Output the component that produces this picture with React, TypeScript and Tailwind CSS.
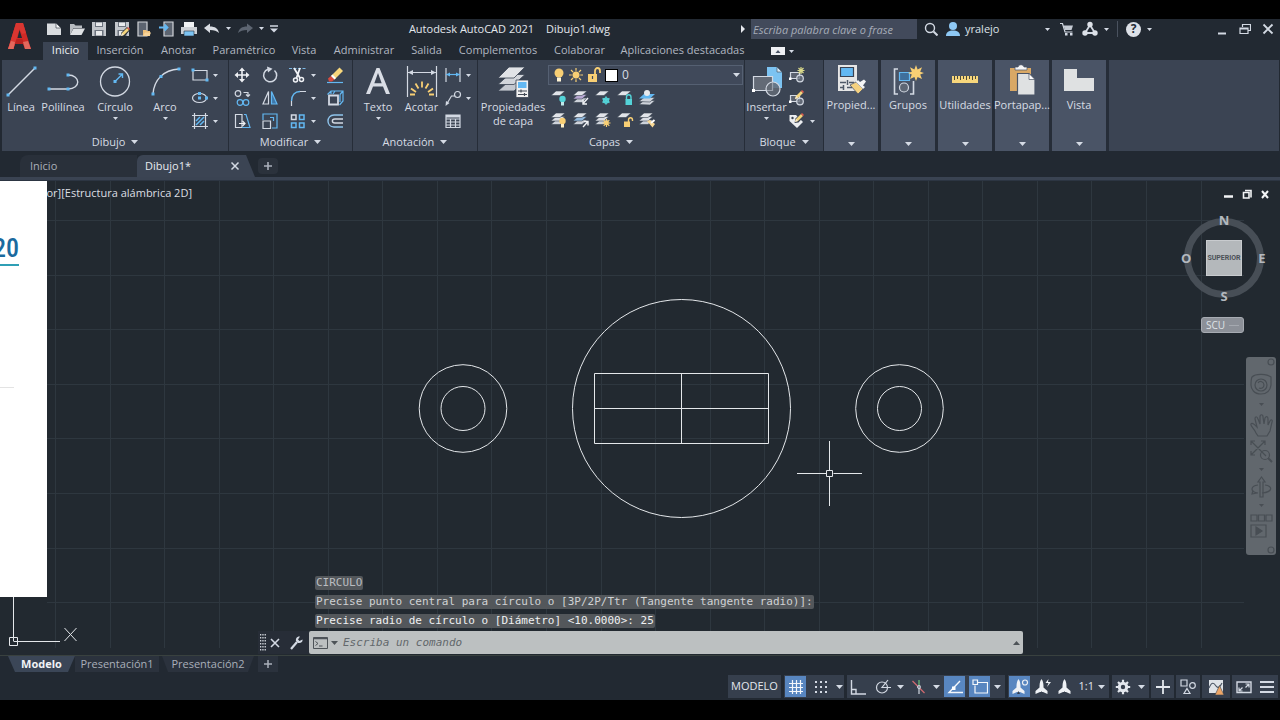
import React from "react";

type Kids = { children?: React.ReactNode };

const Ico = ({ w = 18, h = 18, children }: { w?: number; h?: number } & Kids) => (
  <svg
    width={w}
    height={h}
    viewBox={`0 0 ${w} ${h}`}
    fill="none"
    stroke="#d3d9e3"
    strokeWidth="1.2"
    className="shrink-0"
    aria-hidden="true"
  >
    {children}
  </svg>
);

const Caret = ({ w = 5 }: { w?: number }) => (
  <svg width={w} height={w === 5 ? 3 : 4} viewBox="0 0 8 4" preserveAspectRatio="none" className="shrink-0" aria-hidden="true">
    <path d="M0 0h8L4 4z" fill="#d5dbe5" />
  </svg>
);

const Dot = ({ x, y }: { x: number; y: number }) => (
  <rect x={x - 1.5} y={y - 1.5} width="3" height="3" fill="#63b8f2" stroke="none" />
);

/* ---------- quick access toolbar ---------- */

const NewIcon = () => (
  <Ico w={16} h={16}>
    <path d="M1 2.500h9l5 4.500V14H1z" fill="#d9dcdf" stroke="none" />
    <path d="M10 2v5h5z" fill="#f6f7f8" stroke="#252c36" strokeWidth=".6" />
  </Ico>
);
const OpenIcon = () => (
  <Ico w={16} h={16}>
    <path d="M1 14V3h4l1.500 1.500H13V7H4.500z" fill="#b9bdc2" stroke="none" />
    <path d="M4.500 7.500H16L12.500 14H1z" fill="#dfe2e5" stroke="none" />
  </Ico>
);
const SaveShape = () => (
  <>
    <path d="M1 1h14v14H1z" fill="#c3c7cc" stroke="none" />
    <path d="M4 1h8v5H4zM3.500 9h9v6h-9z" fill="#6c737e" stroke="none" />
    <path d="M5 1.500h6V5H5zM5 10h6v4.500H5z" fill="#e9ebed" stroke="none" />
  </>
);
const Pencil = ({ x = 0, y = 0 }: { x?: number; y?: number }) => (
  <g transform={`translate(${x} ${y})`} stroke="none">
    <path d="M0 9l1-3 5-5 2 2-5 5z" fill="#f3d47c" />
    <path d="M6 1l1-1 2 2-1 1z" fill="#e35b4f" />
    <path d="M0 9l1-3 2 2z" fill="#f6ead0" />
  </g>
);
const SaveIcon = () => (
  <Ico w={16} h={16}>
    <SaveShape />
  </Ico>
);
const SaveAsIcon = () => (
  <Ico w={16} h={16}>
    <SaveShape />
    <path d="M6.500 15.500l1-4L13 6l3 3-5 6z" fill="#252c36" stroke="none" />
    <Pencil x={7} y={6} />
  </Ico>
);
const MobileOpenIcon = () => (
  <Ico w={16} h={16}>
    <path d="M2 1h9v14H2z" fill="#5c6470" stroke="#d2d5d9" />
    <path d="M7 15V9h3l1 1h3v5z" fill="#edbf79" stroke="none" />
    <path d="M7 15l2-3.500h6L13.500 15z" fill="#f7d49a" stroke="none" />
  </Ico>
);
const MobileSaveIcon = () => (
  <Ico w={16} h={16}>
    <path d="M5 1h9v14H5z" fill="#5c6470" stroke="#d2d5d9" />
    <path d="M0 6.500h8M5.500 3.500l3 3-3 3" stroke="#63b8f2" strokeWidth="1.800" />
  </Ico>
);
const PrintIcon = () => (
  <Ico w={16} h={16}>
    <path d="M3 1h10v5H3z" fill="#f1f3f5" stroke="none" />
    <path d="M0 6h16v7H0z" fill="#cdd1d6" stroke="none" />
    <path d="M3 10h10v5H3z" fill="#7cc3f2" stroke="#252c36" strokeWidth=".6" />
  </Ico>
);
const ArrowBack = ({ flip = false }: { flip?: boolean }) => (
  <Ico w={16} h={12}>
    <path
      d="M0 5l6-4.500V3.500c5 0 8 2 9 6.500-2-2-5-3-9-3V10z"
      fill={flip ? "#5d6571" : "#d9dde3"}
      stroke="none"
      transform={flip ? "translate(16 0) scale(-1 1)" : undefined}
    />
  </Ico>
);

/* ---------- large ribbon icons (32 x 32) ---------- */

const LineIcon = () => (
  <Ico w={32} h={32}>
    <path d="M3 29L30 2" strokeWidth="1.400" />
    <Dot x={3} y={29} />
    <Dot x={30} y={2} />
  </Ico>
);
const PolyIcon = () => (
  <Ico w={32} h={32}>
    <path d="M2 23h19c13 0 13-14 0-14" strokeWidth="1.400" />
    <Dot x={2} y={23} />
    <Dot x={21} y={23} />
    <Dot x={21} y={9} />
  </Ico>
);
const CircleIcon = () => (
  <Ico w={32} h={32}>
    <circle cx="16" cy="15.500" r="14.500" strokeWidth="1.300" />
    <path d="M16 15.500L23 8.500M19.500 8h4v4" stroke="#63b8f2" strokeWidth="1.400" />
    <Dot x={16} y={15.5} />
  </Ico>
);
const ArcIcon = () => (
  <Ico w={32} h={32}>
    <path d="M4 28C5 14 14 4 30 3" strokeWidth="1.400" />
    <Dot x={4} y={28} />
    <Dot x={12} y={10.5} />
    <Dot x={30} y={3} />
  </Ico>
);
const TextIcon = () => (
  <Ico w={32} h={32}>
    <path d="M4 28L14.500 2h3L28 28h-4l-3-7.500H11L8 28zM12.300 17.200h7.400L16 7z" fill="#d9dde5" stroke="none" fillRule="evenodd" />
  </Ico>
);
const DimIcon = () => (
  <Ico w={32} h={32}>
    <path d="M1.500 0v31M30.500 0v31M2 6.500h28" strokeWidth="1.200" />
    <path d="M2 6.500l5-2.500v5zM30 6.500l-5-2.500v5z" fill="#d3d9e3" stroke="none" />
    <path d="M16 15.500v6M9.500 17.500l3 5M22.500 17.500l-3 5M5 22.500l5 3.500M27 22.500l-5 3.500M4 28.500h5M28 28.500h-5" stroke="#f8cf74" strokeWidth="1.800" />
  </Ico>
);
const LayerPropsIcon = () => (
  <Ico w={32} h={32}>
    <g stroke="#3b4453" strokeWidth=".8">
      <path d="M1 25L12 15h16L17 25z" fill="#c4c8d0" />
      <path d="M1 18.500L12 8.500h16L17 18.500z" fill="#d2d5db" />
      <path d="M1 12L12 1h16L17 12z" fill="#e1e3e7" />
    </g>
    <path d="M19 14h12.500v17.500H19z" fill="#f1f1f1" stroke="#3b4453" strokeWidth=".8" />
    <path d="M21 16h8.500v6H21z" fill="#63b8f2" stroke="none" />
    <path d="M21 25h9M21 28.500h9M24 23.500v3M27.500 27v3" stroke="#434a56" />
  </Ico>
);
const InsertIcon = () => (
  <Ico w={32} h={32}>
    <path d="M16 1h10l5 5v16H16z" fill="#7cc3f2" stroke="none" />
    <path d="M26 1v5h5z" fill="#d6ecfb" stroke="#3b4453" strokeWidth=".6" />
    <path d="M2.500 10.500h19v14h-19z" fill="#636a76" />
    <circle cx="22" cy="23" r="7" fill="#636a76" fillOpacity=".85" />
    <path d="M21.500 17v7.500H16" stroke="#9aa1ac" />
    <rect x="1" y="23" width="3" height="3" fill="#fff" stroke="none" />
  </Ico>
);
const PropsIcon = () => (
  <Ico w={32} h={32}>
    <path d="M3 1h19v26H3z" fill="#e6e6e6" stroke="none" />
    <path d="M5.500 3.500h13v9h-13z" fill="#63b8f2" stroke="#394253" />
    <path d="M5 18.500h6M14 18.500h5M5 23.500h4M12 23.500h5M12.500 16v5M8.500 21v5" stroke="#505967" strokeWidth="1.500" />
    <path d="M15 21l6-3 7 7-5 5z" fill="#f5d180" stroke="#4a5466" strokeWidth=".8" />
    <path d="M21 18l2-2 2 2 4-2.500 2 2-3 4 2 1.500-2 2z" fill="#f5f5f5" stroke="none" />
  </Ico>
);
const GroupsIcon = () => (
  <Ico w={32} h={32}>
    <path d="M6 5H2.500v25H6M18 30h3.500V17" strokeWidth="1.600" />
    <path d="M7.500 8.500h10v8h-10z" fill="#3f6f9c" stroke="#63b8f2" />
    <circle cx="12" cy="23.500" r="4.500" fill="#5d6674" />
    <path d="M24 1l1.600 4.500L30 3.200l-1.800 4.600L32 9l-3.800 1.400L30 15l-4.400-2L24 17l-1.600-4L18 15l1.800-4.600L16 9l3.800-1.200L18 3.200l4.400 2.300z" fill="#f8cf74" stroke="none" />
  </Ico>
);
const RulerIcon = () => (
  <Ico w={32} h={32}>
    <path d="M3 12h26v7H3z" fill="#f8d77c" stroke="none" />
    <path d="M5.500 12v4M8.500 12v3M11.500 12v4M14.500 12v3M17.500 12v4M20.500 12v3M23.500 12v4M26.500 12v3" stroke="#4a4a3c" strokeWidth="1" />
  </Ico>
);
const ClipIcon = () => (
  <Ico w={32} h={32}>
    <path d="M4 4h21v23H4z" fill="#d9a865" stroke="none" />
    <path d="M9 6V3h3c1-3 5-3 6 0h3v3z" fill="#f5f5f5" stroke="#4a5466" strokeWidth=".7" />
    <path d="M11.500 9.500H23l6 6V31H11.500z" fill="#dfe1e2" stroke="#4a5466" />
    <path d="M23 9.500v6h6z" fill="#fff" stroke="#4a5466" strokeWidth=".7" />
  </Ico>
);
const ViewIcon = () => (
  <Ico w={32} h={32}>
    <path d="M1 5h13v9h17v13H1z" fill="#dfe1e2" stroke="none" />
  </Ico>
);

/* ---------- small ribbon icons ---------- */

const RectIcon = () => (
  <Ico>
    <path d="M2 4.500h14v9.500H2z" />
    <Dot x={2} y={4} />
    <Dot x={16} y={14} />
  </Ico>
);
const EllipseIcon = () => (
  <Ico>
    <ellipse cx="8.500" cy="9" rx="7" ry="4.500" />
    <Dot x={8.5} y={9} />
    <Dot x={15.5} y={9} />
    <Dot x={8.5} y={4.5} />
  </Ico>
);
const HatchIcon = () => (
  <Ico>
    <path d="M3.500 1v16M14.500 1v16M1 3.500h16M1 14.500h16" />
    <path d="M5 9l4-4M5 13l8-8M9 13l4-4" stroke="#63b8f2" strokeWidth="1.500" />
  </Ico>
);
const MoveIcon = () => (
  <Ico>
    <path d="M9 3v12M3 9h12" stroke="#eef0f4" strokeWidth="1.600" />
    <path d="M9 1.500L12 5H6zM9 16.500L6 13h6zM1.500 9L5 6v6zM16.500 9L13 12V6z" fill="#eef0f4" stroke="none" />
  </Ico>
);
const RotateIcon = () => (
  <Ico>
    <path d="M13.500 4.500A6.500 6.500 0 1 1 7 3.200" strokeWidth="1.500" />
    <path d="M6 0.500l5.500 2.300L7 6.500z" fill="#d3d9e3" stroke="none" />
  </Ico>
);
const TrimIcon = () => (
  <Ico>
    <path d="M0 2.500h17" strokeDasharray="3 1.500" stroke="#7db9e6" />
    <path d="M5 2l6 10M11 2L7.500 12" stroke="#f0f2f5" strokeWidth="1.800" />
    <circle cx="6.500" cy="14" r="2" stroke="#f0f2f5" strokeWidth="1.500" />
    <circle cx="12.500" cy="13.500" r="2" stroke="#f0f2f5" strokeWidth="1.500" />
  </Ico>
);
const EraseIcon = () => (
  <Ico>
    <path d="M1 16.500h16" stroke="#63b8f2" />
    <path d="M5 10l8.500-8.500L17 5l-8.500 8.500z" fill="#f8d77c" stroke="none" />
    <path d="M2 12.500L5 10l3.500 3.500L6 15.500H3z" fill="#d94b3f" stroke="none" />
    <path d="M5 10l1.500-1.500L10 12l-1.500 1.500z" fill="#fff" stroke="none" />
  </Ico>
);
const CopyIcon = () => (
  <Ico>
    <circle cx="5" cy="4.500" r="2.800" />
    <path d="M10.500 3.500h4.500V7M13 5.500l2 2 2-2" />
    <circle cx="7" cy="13.500" r="2.800" stroke="#63b8f2" />
    <circle cx="13" cy="13.500" r="2.800" stroke="#63b8f2" />
  </Ico>
);
const MirrorIcon = () => (
  <Ico>
    <path d="M7.500 2.500V15H2z" />
    <path d="M10.500 2.500V15H16z" fill="#3f77a8" stroke="#63b8f2" />
  </Ico>
);
const FilletIcon = () => (
  <Ico>
    <path d="M2.500 17v-5M10 2.500h7" />
    <path d="M2.500 12C2.500 6 6 2.500 11 2.500" stroke="#63b8f2" strokeWidth="1.400" />
  </Ico>
);
const ExplodeIcon = () => (
  <Ico>
    <path d="M3 6.500h9v9H3z" strokeWidth="1.800" />
    <path d="M1.500 5.500L5 2h12v10l-3.500 4M14 5.500L17 2M5 2v3M14 5.500V13M9 2L7 5" stroke="#63b8f2" />
  </Ico>
);
const StretchIcon = () => (
  <Ico>
    <path d="M2.500 2.500H9v13H2.500z" />
    <path d="M11 2.500h2l4 13H9" stroke="#63b8f2" />
    <path d="M6 11.500h6M9.500 9l2.500 2.500L9.500 14" stroke="#f0f2f5" />
  </Ico>
);
const ScaleIcon = () => (
  <Ico>
    <path d="M2 8V2h14v14h-5" stroke="#63b8f2" />
    <path d="M2 9h7.500v7.500H2z" />
    <path d="M9 5.500h3.500V9" stroke="#63b8f2" />
  </Ico>
);
const ArrayIcon = () => (
  <Ico>
    <path d="M2.500 3h4.500v4.500H2.500z" strokeWidth="1.500" />
    <path d="M10.500 3H15v4.500h-4.500zM2.500 11H7v4.500H2.500zM10.500 11H15v4.500h-4.500z" stroke="#63b8f2" strokeWidth="1.500" />
  </Ico>
);
const OffsetIcon = () => (
  <Ico>
    <path d="M17 3H8c-8 0-8 12 0 12h9" stroke="#8fc4ec" strokeWidth="1.400" />
    <path d="M17 7H9c-3.500 0-3.500 4 0 4h8" strokeWidth="1.400" />
  </Ico>
);
const LinearIcon = () => (
  <Ico>
    <path d="M2 2v14M16 2v14" />
    <path d="M2 8.500h14" stroke="#63b8f2" />
    <path d="M2 8.500l4-2v4zM16 8.500l-4-2v4z" fill="#63b8f2" stroke="none" />
  </Ico>
);
const LeaderIcon = () => (
  <Ico>
    <circle cx="13.500" cy="5.500" r="3" />
    <path d="M3 14.500L7.500 7h3" />
    <path d="M1.500 17l.5-5 3.500 2z" fill="#d3d9e3" stroke="none" />
  </Ico>
);
const TableIcon = () => (
  <Ico>
    <path d="M2 3h14v12.500H2zM2 7h14M2 10h14M2 13h14M6.500 7v8.500M11.500 7v8.500" />
    <path d="M2 3h14v2.500H2z" fill="#d3d9e3" stroke="none" />
  </Ico>
);

const Sheets = ({ n = 3, tint = "#dcdfe5" }: { n?: number; tint?: string }) => (
  <g stroke="#3b4453" strokeWidth=".6">
    {n > 2 && <path d="M1 13.500L6 9h9l-5 4.500z" fill="#cdd2da" />}
    {n > 1 && <path d="M1 10L6 5.500h9L10 10z" fill={tint} />}
    <path d="M1 6.500L6 2h9L10 6.500z" fill="#e1e4e9" />
  </g>
);
type LayerKind = "off" | "iso" | "freeze" | "lock" | "current" | "on" | "uniso" | "thaw" | "unlock" | "match";
const LayerIcon = ({ kind }: { kind: LayerKind }) => (
  <Ico>
    {kind === "off" && (
      <>
        <Sheets n={1} />
        <circle cx="12.500" cy="10" r="3.200" fill="#54d3d8" stroke="none" />
        <path d="M11 13h3v3.500h-3z" fill="#bfe9eb" stroke="none" />
      </>
    )}
    {kind === "iso" && (
      <>
        <Sheets tint="#b5a6d0" />
        <path d="M16 9l-4.500 5M11 11v4h4" stroke="#f0f2f5" strokeWidth="1.400" />
      </>
    )}
    {kind === "freeze" && (
      <>
        <Sheets n={1} />
        <path d="M12 7.500v8M8.500 9.500l7 4M15.500 9.500l-7 4" stroke="#54d3d8" strokeWidth="1.600" />
        <circle cx="12" cy="11.500" r="2.500" stroke="#54d3d8" />
      </>
    )}
    {kind === "lock" && (
      <>
        <Sheets n={1} />
        <path d="M10.500 10.500V8c0-3 4.500-3 4.500 0v2.500" stroke="#54d3d8" strokeWidth="1.400" />
        <path d="M9.500 10h6.500v6H9.500z" fill="#54d3d8" stroke="none" />
      </>
    )}
    {kind === "current" && (
      <>
        <path d="M1 15.500l5-4h11l-5 4.500z" fill="#cdd2da" stroke="#3b4453" strokeWidth=".6" />
        <path d="M1 12.500l5-4h11l-5 4.500z" fill="#cdd2da" stroke="#3b4453" strokeWidth=".6" />
        <path d="M1 9.500L6 5h11l-5 4.500z" fill="#63b8f2" stroke="none" />
        <circle cx="9" cy="4" r="3" fill="#e8eaee" stroke="none" />
      </>
    )}
    {kind === "on" && (
      <>
        <Sheets />
        <circle cx="12.500" cy="10" r="3.200" fill="#f8cf74" stroke="none" />
        <path d="M11 13h3v3.500h-3z" fill="#fff0c8" stroke="none" />
      </>
    )}
    {kind === "uniso" && (
      <>
        <Sheets tint="#8fb7dc" />
        <path d="M11 16l4.500-5M12 10.500h4v4" stroke="#f0f2f5" strokeWidth="1.400" />
      </>
    )}
    {kind === "thaw" && (
      <>
        <Sheets />
        <path d="M12.500 8v8M8.500 12h8M9.700 9.200l5.600 5.600M15.300 9.200l-5.600 5.600" stroke="#f8cf74" />
        <circle cx="12.500" cy="12" r="2.300" fill="#f8cf74" stroke="none" />
      </>
    )}
    {kind === "unlock" && (
      <>
        <Sheets n={1} />
        <path d="M12.500 11V9c0-3 4-3 4 0v1" stroke="#f8cf74" strokeWidth="1.400" />
        <path d="M8 10.500h6v5.500H8z" fill="#f8cf74" stroke="none" />
      </>
    )}
    {kind === "match" && (
      <>
        <Sheets />
        <path d="M9 10l3-1 5 4-2.500 3.500z" fill="#f8d894" stroke="none" />
        <path d="M13 12l3.500-3" stroke="#fff" strokeWidth="2" />
      </>
    )}
  </Ico>
);
const blockBase = (
  <>
    <path d="M2.500 6.500h9v6h-9z" fill="#5b626f" />
    <circle cx="12" cy="12.500" r="3.300" fill="#6c7380" fillOpacity=".8" />
    <rect x="1" y="11.500" width="2.500" height="2.500" fill="#fff" stroke="none" />
  </>
);
const BlockNew = () => (
  <Ico>
    {blockBase}
    <path d="M13 1v7M9.500 4.500h7M10.500 2l5 5M15.500 2l-5 5" stroke="#d9d98a" />
  </Ico>
);
const BlockEdit = () => (
  <Ico>
    {blockBase}
    <Pencil x={7} y={1} />
  </Ico>
);
const BlockAttr = () => (
  <Ico>
    <path d="M1.500 3H8l7 7-6 6-7.500-7z" fill="#eceef1" stroke="none" />
    <circle cx="4.500" cy="6" r="1.200" fill="#3b4453" stroke="none" />
    <path d="M6.500 11l1-4.500L13 1l3.500 3-6 6.500z" fill="#3b4453" stroke="none" />
    <Pencil x={7} y={1} />
  </Ico>
);

/* ---------- ribbon building blocks ---------- */

const Big = ({ icon, label, caret, w }: { icon: React.ReactNode; label: string; caret?: boolean; w: string }) => (
  <button className={`flex flex-col items-center pt-1.5 ${w}`}>
    {icon}
    <span className="leading-[17px] whitespace-nowrap">{label}</span>
    {caret && (
      <span className="mt-0.5">
        <Caret />
      </span>
    )}
  </button>
);

const Small = ({ icon, name, caret }: { icon: React.ReactNode; name: string; caret?: boolean }) => (
  <button aria-label={name} className="flex h-[22px] items-center gap-1">
    {icon}
    {caret && <Caret />}
  </button>
);

const Stack = ({ children }: Kids) => <div className="flex flex-col items-start gap-px pt-1">{children}</div>;

const Panel = ({ title, w, children }: { title: string; w: string } & Kids) => (
  <section className={`flex shrink-0 flex-col border-r border-[#262d38] bg-[#3b4453] ${w}`}>
    <div className="flex flex-1">{children}</div>
    <button className="flex h-[18px] items-center justify-center gap-1.5">
      {title}
      <Caret w={7} />
    </button>
  </section>
);

const Collapsed = ({ icon, label }: { icon: React.ReactNode; label: string }) => (
  <button className="flex w-[57px] shrink-0 flex-col items-center border-r-3 border-[#262d38] bg-[#4a5466] pt-1 pb-[5px]">
    {icon}
    <span className="leading-[18px] whitespace-nowrap">{label}</span>
    <span className="mt-auto">
      <Caret w={7} />
    </span>
  </button>
);

const quick = [
  { name: "Nuevo", icon: <NewIcon /> },
  { name: "Abrir", icon: <OpenIcon /> },
  { name: "Guardar", icon: <SaveIcon /> },
  { name: "Guardar como", icon: <SaveAsIcon /> },
  { name: "Abrir desde web y móvil", icon: <MobileOpenIcon /> },
  { name: "Guardar en web y móvil", icon: <MobileSaveIcon /> },
  { name: "Trazar", icon: <PrintIcon /> },
];

const tabs = [
  { t: "Inicio", w: "w-[45px]" },
  { t: "Inserción", w: "w-[64px]" },
  { t: "Anotar", w: "w-[53px]" },
  { t: "Paramétrico", w: "w-[78px]" },
  { t: "Vista", w: "w-[42px]" },
  { t: "Administrar", w: "w-[78px]" },
  { t: "Salida", w: "w-[47px]" },
  { t: "Complementos", w: "w-[96px]" },
  { t: "Colaborar", w: "w-[67px]" },
  { t: "Aplicaciones destacadas", w: "w-[139px]" },
];

const TitleBar = () => (
  <div className="flex h-[23px] items-start">
    <div className="flex h-[19px] w-[240px] shrink-0 items-center">
      <div className="flex w-[154px] justify-between pl-[3px]">
        {quick.map((q) => (
          <button key={q.name} aria-label={q.name}>
            {q.icon}
          </button>
        ))}
      </div>
      <div className="flex items-center gap-1.5 pl-[7px]">
        <button aria-label="Deshacer"><ArrowBack /></button>
        <button aria-label="Historial de deshacer"><Caret /></button>
        <button aria-label="Rehacer"><ArrowBack flip /></button>
        <button aria-label="Historial de rehacer"><Caret /></button>
        <button aria-label="Personalizar barra">
          <Ico w={8} h={8}>
            <path d="M0 1h8" strokeWidth="1.500" />
            <path d="M0 3.500h8L4 7.500z" fill="#d3d9e3" stroke="none" />
          </Ico>
        </button>
      </div>
    </div>
    <h1 className="flex h-5 flex-1 items-center justify-center gap-3 whitespace-nowrap text-[#e3e7ed]">
      <span>Autodesk AutoCAD 2021</span>
      <span>Dibujo1.dwg</span>
    </h1>
    <div className="flex h-5 shrink-0 items-center">
      <Ico w={15} h={10}>
        <path d="M5 1l4 4-4 4z" fill="#e6e9ee" stroke="none" />
      </Ico>
      <input
        aria-label="Buscar"
        placeholder="Escriba palabra clave o frase"
        className="h-5 w-[166px] bg-[#424a5b] px-0.5 italic outline-none placeholder:text-[#a6acb8]"
      />
      <button aria-label="Buscar ayuda" className="flex w-[28px] justify-center">
        <Ico w={14} h={14}>
          <circle cx="6" cy="6" r="4.500" strokeWidth="1.400" />
          <path d="M9.500 9.500l4 4" strokeWidth="2" />
        </Ico>
      </button>
      <button className="flex w-[105px] items-center gap-1 text-[#dde1e8]">
        <Ico w={16} h={16}>
          <circle cx="8" cy="5" r="4" fill="#8ec8f4" stroke="none" />
          <path d="M1 15c0-4 3-5.500 7-5.500s7 1.500 7 5.500z" fill="#8ec8f4" stroke="none" />
        </Ico>
        <span className="flex-1 text-left">yralejo</span>
        <Caret />
      </button>
      <button aria-label="App Store" className="ml-2.5">
        <Ico w={14} h={14}>
          <path d="M0 1.500h2.500L5 10h7.500" />
          <path d="M3.500 3.500H13L11.500 8H5z" fill="#c4cad3" stroke="none" />
          <path d="M5 11h2.500v2.500H5zM10 11h2.500v2.500H10z" fill="#d3d9e3" stroke="none" />
        </Ico>
      </button>
      <button aria-label="Conexión" className="ml-2 flex items-center gap-1.5">
        <Ico w={16} h={16}>
          <path d="M8 4L3 12h10z" strokeWidth="1.800" />
          <circle cx="8" cy="3.500" r="2.700" fill="#dde1e8" stroke="none" />
          <circle cx="3" cy="12" r="2.700" fill="#dde1e8" stroke="none" />
          <circle cx="13" cy="12" r="2.700" fill="#dde1e8" stroke="none" />
        </Ico>
        <Caret />
      </button>
      <span className="ml-2 h-4 w-px bg-[#4a525f]" />
      <button aria-label="Ayuda" className="ml-2 flex items-center gap-1.5">
        <span className="flex size-[15px] items-center justify-center rounded-full bg-[#dde1e8] text-[12px] font-bold text-[#252c36]">?</span>
        <Caret />
      </button>
      <div className="flex w-[128px] items-center justify-end gap-[11px] pr-1.5">
        <button aria-label="Minimizar">
          <Ico w={11} h={12}>
            <path d="M1 10.500h8" strokeWidth="2" />
          </Ico>
        </button>
        <button aria-label="Restaurar">
          <Ico w={12} h={12}>
            <path d="M3.500 4V1.500h8v6H9M1 5h8v5.500H1zM1 6h8" />
          </Ico>
        </button>
        <button aria-label="Cerrar">
          <Ico w={12} h={12}>
            <path d="M1.500 1.500l9 9M10.500 1.500l-9 9" strokeWidth="1.800" />
          </Ico>
        </button>
      </div>
    </div>
  </div>
);

const Ribbon = () => (
  <div className="ml-0.5 flex h-[91px]">
    <Panel title="Dibujo" w="w-[227px]">
      <Big icon={<LineIcon />} label="Línea" w="w-[38px]" />
      <Big icon={<PolyIcon />} label="Polilínea" w="w-[46px]" />
      <Big icon={<CircleIcon />} label="Círculo" caret w="w-[58px]" />
      <Big icon={<ArcIcon />} label="Arco" caret w="w-[42px]" />
      <div className="pl-[5px]">
        <Stack>
          <Small name="Rectángulo" icon={<RectIcon />} caret />
          <Small name="Elipse" icon={<EllipseIcon />} caret />
          <Small name="Sombreado" icon={<HatchIcon />} caret />
        </Stack>
      </div>
    </Panel>
    <Panel title="Modificar" w="w-[124px]">
      <div className="flex gap-2.5 pl-1">
        <Stack>
          <Small name="Desplazar" icon={<MoveIcon />} />
          <Small name="Copiar" icon={<CopyIcon />} />
          <Small name="Estirar" icon={<StretchIcon />} />
        </Stack>
        <Stack>
          <Small name="Girar" icon={<RotateIcon />} />
          <Small name="Simetría" icon={<MirrorIcon />} />
          <Small name="Escala" icon={<ScaleIcon />} />
        </Stack>
        <Stack>
          <Small name="Recortar" icon={<TrimIcon />} caret />
          <Small name="Empalme" icon={<FilletIcon />} caret />
          <Small name="Matriz" icon={<ArrayIcon />} caret />
        </Stack>
        <Stack>
          <Small name="Borrar" icon={<EraseIcon />} />
          <Small name="Descomponer" icon={<ExplodeIcon />} />
          <Small name="Desfase" icon={<OffsetIcon />} />
        </Stack>
      </div>
    </Panel>
    <Panel title="Anotación" w="w-[125px]">
      <Big icon={<TextIcon />} label="Texto" caret w="w-[50px]" />
      <Big icon={<DimIcon />} label="Acotar" w="w-[37px]" />
      <div className="pl-1">
        <Stack>
          <Small name="Lineal" icon={<LinearIcon />} caret />
          <Small name="Directriz" icon={<LeaderIcon />} caret />
          <Small name="Tabla" icon={<TableIcon />} />
        </Stack>
      </div>
    </Panel>
    <Panel title="Capas" w="w-[267px]">
      <button className="flex w-[70px] flex-col items-center pt-1.5">
        <LayerPropsIcon />
        <span className="mt-0.5 leading-[14px] whitespace-nowrap">
          Propiedades
          <br />
          de capa
        </span>
      </button>
      <div className="flex flex-1 flex-col pt-[5px] pr-px">
        <div className="flex h-5 items-center border border-[#556072] bg-[#40495a] pr-0.5 pl-0.5">
          <Ico w={16} h={16}>
            <circle cx="8" cy="6" r="4.500" fill="#f8cf74" stroke="none" />
            <path d="M6 10.500h4v4H6z" fill="#fff4d4" stroke="none" />
          </Ico>
          <Ico w={18} h={16}>
            <path d="M9 1v14M2 8h14M4 3l10 10M14 3L4 13" stroke="#f8cf74" />
            <circle cx="9" cy="8" r="4" fill="#f8cf74" stroke="#40495a" strokeWidth=".8" />
          </Ico>
          <Ico w={20} h={16}>
            <path d="M10 7V4c0-4 5-4 5 0v2" stroke="#f8cf74" strokeWidth="1.800" />
            <path d="M3 7h9v8H3z" fill="#f8cf74" stroke="none" />
            <path d="M7.500 9v3" stroke="#40495a" />
          </Ico>
          <span className="size-[13px] border border-black bg-white" />
          <select aria-label="Capa actual" className="h-4 flex-1 appearance-none bg-transparent pl-1 text-[12px] leading-4 outline-none">
            <option>0</option>
          </select>
          <Caret w={7} />
        </div>
        <div className="mt-1 flex flex-col gap-1">
          <div className="flex gap-1 pl-0.5">
            {(["off", "iso", "freeze", "lock", "current"] as LayerKind[]).map((k) => (
              <button key={k} aria-label={`Capa ${k}`}>
                <LayerIcon kind={k} />
              </button>
            ))}
          </div>
          <div className="flex gap-1 pl-0.5">
            {(["on", "uniso", "thaw", "unlock", "match"] as LayerKind[]).map((k) => (
              <button key={k} aria-label={`Capa ${k}`}>
                <LayerIcon kind={k} />
              </button>
            ))}
          </div>
        </div>
      </div>
    </Panel>
    <Panel title="Bloque" w="w-[79px]">
      <Big icon={<InsertIcon />} label="Insertar" caret w="w-[43px]" />
      <Stack>
        <Small name="Crear bloque" icon={<BlockNew />} />
        <Small name="Editar bloque" icon={<BlockEdit />} />
        <Small name="Editar atributo" icon={<BlockAttr />} caret />
      </Stack>
    </Panel>
    <Collapsed icon={<PropsIcon />} label="Propied..." />
    <Collapsed icon={<GroupsIcon />} label="Grupos" />
    <Collapsed icon={<RulerIcon />} label="Utilidades" />
    <Collapsed icon={<ClipIcon />} label="Portapap..." />
    <Collapsed icon={<ViewIcon />} label="Vista" />
    <div className="mr-px flex-1 bg-[#3b4453]" />
  </div>
);

const vLines = Array.from({ length: 22 }, (_, i) => Math.round(55 + 54.55 * i) + 0.5);
const hLines = Array.from({ length: 8 }, (_, i) => Math.round(220 + 54.6 * i) + 0.5);

const Drawing = () => (
  <svg
    viewBox="0 181 1280 474"
    preserveAspectRatio="xMidYMid slice"
    className="absolute inset-0 size-full"
    fill="none"
    stroke="#e4e7ea"
    role="img"
    aria-label="Dibujo"
  >
    <g stroke="#2e373f">
      {vLines.map((x) => (
        <path key={x} d={`M${x} 181V648`} />
      ))}
      {hLines.map((y) => (
        <path key={y} d={`M47 ${y}H1244`} />
      ))}
    </g>
    <circle cx="681.500" cy="408.500" r="109" />
    <circle cx="463" cy="408.500" r="43.800" />
    <circle cx="463" cy="408.500" r="22" />
    <circle cx="899.500" cy="408.500" r="43.800" />
    <circle cx="899.500" cy="408.500" r="22" />
    <path d="M594.500 373.500h174v70h-174zM594.500 408.500h174M681.500 373.500v70" />
    <path d="M797 473.500h29.500M833.500 473.500H862M829.500 441v29.500M829.500 477v29M826.500 470.500h6v6h-6z" />
    <path d="M13.500 597v44M13.500 641.500H60M9.500 637.500h8v8h-8zM64.500 628l12 13M76.500 628l-12 13" />
  </svg>
);

const ViewCube = () => (
  <div className="absolute top-[31px] right-[13px] grid grid-cols-[10px_66px_10px] text-center text-[13px] leading-4 font-bold text-[#b4b9bf]">
    <svg viewBox="0 0 80 80" className="absolute top-[6px] left-[3px] size-20" fill="none" aria-hidden="true">
      <circle cx="40" cy="40" r="36.500" stroke="#474e56" strokeWidth="7" />
    </svg>
    <span className="relative col-span-3">N</span>
    <span className="relative self-center">O</span>
    <button className="relative mx-auto my-3 size-9 border border-[#c8cbce] bg-[#b4b8bb] font-['Liberation_Sans_Narrow','Roboto',sans-serif] text-[7px] text-[#4b5157]">
      SUPERIOR
    </button>
    <span className="relative self-center">E</span>
    <span className="relative col-span-3">S</span>
  </div>
);

const NavBar = () => (
  <div className="absolute top-[176px] right-[4px] rounded-[3px] bg-[#61676d]">
    <svg width="30" height="198" viewBox="0 0 30 198" fill="none" stroke="#484e54" strokeWidth="1.200" aria-label="Barra de navegación">
      <circle cx="25" cy="5" r="3" />
      <path d="M6 20c4-4 15-3 19 0v8c-1 7-6 9-10 9-7 0-10-5-10-9 0-3 0-6 1-8z" />
      <circle cx="15" cy="28" r="6" />
      <path d="M12 26c2-3 6-1 6 2s-3 4-5 3" />
      <path d="M13 46h5l-2.500 3z" fill="#484e54" stroke="none" />
      <path d="M10 76c-2-5-6-7-5-9s4 1 6 3l-2-8c0-3 2-3 3 0l2 5v-7c0-3 3-3 3 0l1 7 1-6c1-2 3-2 3 1v6l2-4c1-2 3-1 2 1l-2 9-3 5H12z" />
      <path d="M5 84l15 15M19 84L5 98M5 88v-4h4M15 84h4v4M5 94v4h4" />
      <circle cx="19" cy="98" r="4.500" />
      <path d="M22 101l4 4" strokeWidth="2" />
      <path d="M13 111h5l-2.500 3z" fill="#484e54" stroke="none" />
      <path d="M14 140v-15h-2l3.500-5 3.500 5h-2v15z" />
      <path d="M12 128c-8 1-8 7 0 8M19 128c8 1 8 7-3 8M7 133l-1 4 5-1" />
      <path d="M13 147h5l-2.500 3z" fill="#484e54" stroke="none" />
      <path d="M5 158h6v6H5zM12.500 158h6v6h-6zM20 158h6v6h-6zM5 168h15v12H5z" />
      <path d="M10 170l6 4-6 4z" fill="#484e54" />
      <circle cx="25" cy="193" r="3" />
    </svg>
  </div>
);

const history = [
  { t: "CIRCULO", c: "text-[#b9bcc0]" },
  { t: "Precise punto central para círculo o [3P/2P/Ttr (Tangente tangente radio)]:", c: "text-[#d0d2d4]" },
  { t: "Precise radio de círculo o [Diámetro] <10.0000>: 25", c: "text-[#f0f1f2]" },
];

const CommandLine = () => (
  <div className="absolute right-[257px] bottom-px left-[258px] font-['DejaVu_Sans_Mono','Liberation_Mono',monospace] text-[11px]">
    <div className="flex flex-col items-start gap-[5px] pb-[3px] pl-[57px]">
      {history.map((l) => (
        <div key={l.t} className={`rounded-xs bg-[#53575b] px-px leading-[14px] whitespace-nowrap ${l.c}`}>
          {l.t}
        </div>
      ))}
    </div>
    <div className="flex h-[23px]">
      <div className="flex w-[51px] shrink-0 items-center gap-1 bg-[#272d37] pl-0.5">
        <svg width="6" height="17" viewBox="0 0 6 17" fill="#d0d4da" aria-hidden="true">
          {[0, 3, 6, 9, 12, 15].map((y) => (
            <path key={y} d={`M0 ${y}h1.300v1.500H0zM2.300 ${y}h1.300v1.500H2.300zM4.600 ${y}h1.300v1.500H4.600z`} />
          ))}
        </svg>
        <button aria-label="Cerrar línea de comandos">
          <Ico w={10} h={10}>
            <path d="M1 1l8 8M9 1L1 9" strokeWidth="1.600" />
          </Ico>
        </button>
        <button aria-label="Personalizar" className="pl-1">
          <Ico w={16} h={16}>
            <path d="M3 14l6-7" strokeWidth="2.200" />
            <path d="M14.500 4.500l-3 1.500-1.500-1.500L12 1.500C9 1 7.500 3.500 8 6l2 2c3 .5 5-1 4.500-3.500z" fill="#d3d9e3" stroke="none" />
          </Ico>
        </button>
      </div>
      <div className="flex flex-1 items-center rounded-xs bg-[#bcc0c1] pr-[3px]">
        <button aria-label="Comandos recientes" className="flex items-center gap-[3px] pl-1">
          <svg width="15" height="12" viewBox="0 0 15 12" fill="none" stroke="#4d5358" aria-hidden="true">
            <path d="M.5.5h14v11H.5z" />
            <path d="M.5 1.500h14" strokeWidth="1.500" />
            <path d="M2.500 4.500l2.500 2-2.500 2M6 9h3.500" />
          </svg>
          <svg width="7" height="4" viewBox="0 0 7 4" aria-hidden="true">
            <path d="M0 0h7L3.500 4z" fill="#4d5358" />
          </svg>
        </button>
        <input
          aria-label="Línea de comandos"
          placeholder="Escriba un comando"
          className="h-full flex-1 bg-transparent px-[5px] italic outline-none placeholder:text-[#63686c]"
        />
        <button aria-label="Historial de comandos">
          <svg width="7" height="4" viewBox="0 0 7 4" aria-hidden="true">
            <path d="M0 4h7L3.500 0z" fill="#4d5358" />
          </svg>
        </button>
      </div>
    </div>
  </div>
);

const Workspace = () => (
  <main className="relative min-h-[474px] flex-1 overflow-hidden bg-[#222930]">
    <Drawing />
    <div className="absolute top-1 left-0 w-[192px] text-right leading-4 whitespace-nowrap text-[#dcdfe3]">
      [Superior][Estructura alámbrica 2D]
    </div>
    <div className="absolute top-0 left-0 h-[416px] w-[47px] overflow-hidden bg-white">
      <div className="mt-[50px] flex h-[35px] w-[19px] justify-end border-b-2 border-[#2f9fb5] font-['Liberation_Sans_Narrow','Roboto_Condensed','Roboto',sans-serif] text-[26px] leading-[35px] font-medium text-[#1b6a9e]">
        20
      </div>
      <div className="mt-[121px] h-px w-3.5 bg-[#e3e3e3]" />
    </div>
    <div className="absolute top-[7px] right-[10px] flex gap-2">
      <button aria-label="Minimizar dibujo">
        <Ico w={10} h={12}>
          <path d="M0 8.500h9" strokeWidth="2.500" stroke="#f3f4f6" />
        </Ico>
      </button>
      <button aria-label="Restaurar dibujo">
        <Ico w={10} h={12}>
          <path d="M3 2.500h6v7M1.500 4.500h5.500v5.500H1.500z" strokeWidth="1.600" stroke="#f3f4f6" />
        </Ico>
      </button>
      <button aria-label="Cerrar dibujo">
        <Ico w={10} h={12}>
          <path d="M2 3l6 7M8 3l-6 7" strokeWidth="2" stroke="#f3f4f6" />
        </Ico>
      </button>
    </div>
    <ViewCube />
    <button className="absolute top-[136px] right-[36px] flex h-4 w-[43px] items-center justify-between rounded-[3px] border border-[#a7abb2] bg-[#8c9098] px-1 text-[10px] text-[#dfe2e6]">
      SCU
      <span className="h-px w-2.5 bg-[#a5a9b0]" />
    </button>
    <NavBar />
    <CommandLine />
  </main>
);

const Grp = ({ children, w }: { w: string } & Kids) => (
  <div className={`flex h-[23px] items-center bg-[#363f4d] ${w}`}>{children}</div>
);
const Tg = ({ name, on, children }: { name: string; on?: boolean } & Kids) => (
  <button aria-label={name} aria-pressed={!!on} className={`flex h-[21px] w-[21px] shrink-0 items-center justify-center ${on ? "bg-[#5886c0]" : ""}`}>
    {children}
  </button>
);
const Anno = ({ children }: Kids) => (
  <Ico w={18} h={18}>
    <path d="M7.500 1c2 2.500 2 6 2 8.500l4 3.500v3l-4.500-2H6l-4.500 2v-3l4-3.500c0-2.500 0-6 2-8.500z" fill="#eef1f5" stroke="none" />
    <path d="M6 16l1.500-3L9 16z" fill="#363f4d" stroke="none" />
    {children}
  </Ico>
);

const StatusBar = () => (
  <div className="mt-[3px] flex h-[25px] justify-end gap-[3px] pr-0.5 text-[#e3e7ed]">
    <Grp w="w-[53px] justify-center">
      <button>MODELO</button>
    </Grp>
    <Grp w="w-[60px] justify-between px-px">
      <Tg name="Rejilla" on>
        <Ico w={16} h={16}>
          <path d="M4.500 1v14M8.500 1v14M12.500 1v14M1 4.500h14M1 8.500h14M1 12.500h14" stroke="#f4f7fb" />
        </Ico>
      </Tg>
      <Tg name="Forzar cursor">
        <Ico w={14} h={14}>
          <path d="M1 2h12M1 7h12M1 12h12" strokeWidth="2" strokeDasharray="2 3" />
        </Ico>
      </Tg>
      <Caret w={7} />
    </Grp>
    <Grp w="w-[158px] justify-between pr-1">
      <Tg name="Orto">
        <Ico w={16} h={16}>
          <path d="M1.500 1v14H16M1.500 10.500H6V15" strokeWidth="1.400" />
        </Ico>
      </Tg>
      <Tg name="Polar">
        <Ico w={16} h={16}>
          <circle cx="7" cy="8.500" r="5.500" />
          <path d="M16 8.500H7l6-7.500" />
        </Ico>
      </Tg>
      <Caret w={7} />
      <Tg name="Isométrico">
        <Ico w={16} h={16}>
          <path d="M1.500 2l12 12" stroke="#cf6b70" />
          <path d="M8 1v5" stroke="#6cc47c" />
          <path d="M8 9v6" />
          <circle cx="8" cy="8" r="1.300" fill="#363f4d" />
        </Ico>
      </Tg>
      <Caret w={7} />
      <Tg name="Rastreo" on>
        <Ico w={16} h={16}>
          <path d="M13 2L2 13.500h14" stroke="#f4f7fb" strokeWidth="1.400" />
          <rect x="5" y="7.500" width="3.500" height="3.500" fill="#fff" stroke="none" />
        </Ico>
      </Tg>
      <Tg name="Referencia a objetos" on>
        <Ico w={16} h={16}>
          <path d="M6 3.500h9.500V14H3V6.500M1 1h4.500v4.500H1z" stroke="#f4f7fb" />
        </Ico>
      </Tg>
      <Caret w={7} />
    </Grp>
    <Grp w="w-[101px] justify-between pr-1 pl-px">
      <Tg name="Visibilidad de anotación" on>
        <Anno>
          <circle cx="14" cy="4.500" r="2.500" stroke="#eef1f5" />
        </Anno>
      </Tg>
      <Tg name="Escala automática">
        <Anno>
          <path d="M14.500 1l-3 4h3l-1.500 4 4-5h-3z" fill="#eef1f5" stroke="none" />
        </Anno>
      </Tg>
      <Tg name="Objeto anotativo">
        <Anno />
      </Tg>
      <button className="flex items-center gap-1">
        <span>1:1</span>
        <Caret w={7} />
      </button>
    </Grp>
    <div className="flex gap-0.5">
      <Grp w="w-[37px] justify-between pr-1">
        <Tg name="Espacio de trabajo">
          <Ico w={16} h={16}>
            <circle cx="8" cy="8" r="3.700" stroke="#e3e7ed" strokeWidth="3" />
            <path d="M8 .8v3M8 12.200v3M.8 8h3M12.200 8h3M3 3l2 2M11 11l2 2M13 3l-2 2M5 11l-2 2" stroke="#e3e7ed" strokeWidth="2.200" />
          </Ico>
        </Tg>
        <Caret w={7} />
      </Grp>
      <Grp w="w-[23px] justify-center">
        <Tg name="Supervisor">
          <Ico w={16} h={16}>
            <path d="M8 1v14M1 8h14" stroke="#e3e7ed" strokeWidth="1.800" />
          </Ico>
        </Tg>
      </Grp>
      <Grp w="w-[24px] justify-center">
        <Tg name="Aislar objetos">
          <Ico w={16} h={16}>
            <path d="M1 1h6v6H1zM7 9.500l3 5H4z" />
            <circle cx="12.500" cy="6.500" r="2.800" />
          </Ico>
        </Tg>
      </Grp>
      <Grp w="w-[28px] justify-center">
        <Tg name="Rendimiento de gráficos">
          <Ico w={16} h={16}>
            <path d="M1 1h14v13H1z" fill="#dfe3e8" stroke="none" />
            <path d="M1 9c3-7 5-5 7-2s4 1 6-3" stroke="#4b5563" />
            <path d="M11.500 6.500L16 16H7z" fill="#eda566" stroke="#363f4d" strokeWidth=".6" />
          </Ico>
        </Tg>
      </Grp>
      <Grp w="w-[46px] justify-around">
        <Tg name="Pantalla limpia">
          <Ico w={16} h={16}>
            <path d="M1 3h14v10.500H1z" strokeWidth="1.400" />
            <path d="M9.500 5H13v3.500M13 5L9.500 8.500M3 8.500V12h3.500M3 12l3.500-3.500" />
          </Ico>
        </Tg>
        <Tg name="Personalización">
          <Ico w={16} h={16}>
            <path d="M1 3h14M1 8h14M1 13h14" strokeWidth="1.800" />
          </Ico>
        </Tg>
      </Grp>
    </div>
  </div>
);

export default function App() {
  return (
    <div className="flex min-h-screen flex-col bg-[#222932] font-['Open_Sans','Noto_Sans',sans-serif] text-[11px] text-[#d7dce4]">
      <div className="h-[19px] shrink-0 bg-black" />
      <header className="flex shrink-0">
        <button aria-label="Menú de la aplicación" className="flex w-[43px] shrink-0 items-start pt-[3px] pl-[7px]">
          <svg width="25" height="30" viewBox="0 0 25 30" aria-hidden="true">
            <path d="M1 27L9 1h7l8 26h-6l-2-5H8l-1.500 5z" fill="#cf2a26" />
            <path d="M9 1h7l3 10-4 1-2.500-5L7 25l-.5 2H1z" fill="#d93631" />
            <path d="M1 27l3-8 4 1-1.500 7z" fill="#e2685d" />
            <path d="M8 22l1.500-5h6l1 5z" fill="#b8221f" />
            <path d="M10.500 16l2-8 2.500 8z" fill="#222932" />
            <path d="M18 27l-2-7 5-1 3 8z" fill="#e2685d" />
          </svg>
        </button>
        <div className="min-w-0 flex-1">
          <TitleBar />
          <nav className="flex h-[18px]">
            {tabs.map((t, i) => (
              <button
                key={t.t}
                className={`shrink-0 pb-[3px] text-center leading-[15px] whitespace-nowrap ${t.w} ${i === 0 ? "bg-[#3b4453] text-[#eef1f5]" : "text-[#b1b7c1]"}`}
              >
                {t.t}
              </button>
            ))}
            <button aria-label="Minimizar cinta" className="ml-[19px] flex items-center gap-1">
              <Ico w={14} h={8}>
                <path d="M0 0h14v8H0z" fill="#eef0f3" stroke="none" />
                <path d="M4.500 6h5L7 3z" fill="#4a5466" stroke="none" />
              </Ico>
              <Caret />
            </button>
          </nav>
        </div>
      </header>
      <Ribbon />
      <div className="mt-1 flex h-[22px] shrink-0 items-stretch pl-5">
        <button className="w-[117px] rounded-tl-lg bg-[#29303a] pl-2.5 text-left text-[#a9afb9]">Inicio</button>
        <div className="flex w-[118px] items-center justify-between rounded-tl-md bg-[#3b4453] pr-3 pl-2 text-[#e8ebf0] [clip-path:polygon(0_0,109px_0,100%_100%,0_100%)]">
          <span>Dibujo1*</span>
          <button aria-label="Cerrar pestaña">
            <Ico w={16} h={10}>
              <path d="M4.500 1.500l7 7M11.500 1.500l-7 7" strokeWidth="1.500" />
            </Ico>
          </button>
        </div>
        <button aria-label="Nueva pestaña" className="my-[3px] ml-[3px] flex w-5 items-center justify-center rounded-sm bg-[#2b323c]">
          <Ico w={10} h={10}>
            <path d="M5 1v8M1 5h8" strokeWidth="1.600" stroke="#aab0ba" />
          </Ico>
        </button>
      </div>
      <div className="h-1 shrink-0 border-b border-[#2c3542] bg-[#3a4352]" />
      <Workspace />
      <footer className="shrink-0 border-t border-[#39413f]">
        <div className="flex h-4 items-stretch pl-2 leading-[14px] text-[#a9afb9]">
          <button className="w-[67px] bg-[#3b4657] font-bold text-[#f1f3f6] [clip-path:polygon(0_0,100%_0,60px_100%,7px_100%)]">Modelo</button>
          <button className="w-[84px] bg-[#2b323d]">Presentación1</button>
          <button className="ml-[3px] w-[92px] bg-[#2b323d] [clip-path:polygon(0_0,100%_0,86px_100%,6px_100%)]">Presentación2</button>
          <button aria-label="Nueva presentación" className="ml-1 flex w-5 items-center justify-center bg-[#2b323d]">
            <Ico w={10} h={10}>
              <path d="M5 1v8M1 5h8" strokeWidth="1.500" stroke="#aab0ba" />
            </Ico>
          </button>
        </div>
        <StatusBar />
      </footer>
      <div className="h-5 shrink-0 bg-black" />
    </div>
  );
}
